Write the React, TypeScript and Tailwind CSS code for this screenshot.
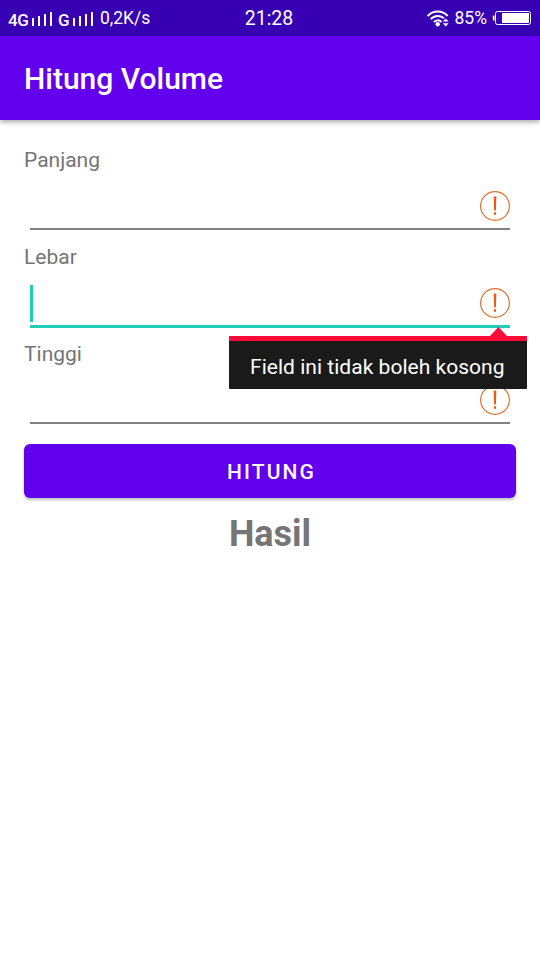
import React from "react";

function SignalBars() {
  return (
    <svg width="22" height="14" viewBox="0 0 22 14" fill="white" shapeRendering="crispEdges">
      <rect x="0" y="6" width="2" height="8" />
      <rect x="6" y="4" width="2" height="10" />
      <rect x="12" y="2" width="2" height="12" />
      <rect x="18" y="0" width="2" height="14" />
    </svg>
  );
}

function WifiIcon() {
  return (
    <svg width="22" height="17" viewBox="0 0 22 17" fill="none" stroke="white" strokeWidth="2">
      <path d="M0.7 6C6 0 15.4 0 20.7 6" />
      <path d="M3.8 9.2C7.5 5 13.9 5 17 8.4" />
      <path d="M6.9 12.2C8.9 9.8 12.5 9.8 14.5 12" />
      <circle cx="10.7" cy="14.2" r="2.2" fill="white" stroke="none" />
      <path d="M15.8 11.6L18.7 8.4L21.6 11.6ZM15.8 13.2L18.7 16.4L21.6 13.2Z" fill="white" stroke="none" />
    </svg>
  );
}

function BatteryIcon() {
  return (
    <svg width="40" height="16" viewBox="0 0 40 16">
      <rect x="0.8" y="5.5" width="1.8" height="5" rx="0.6" fill="white" />
      <rect x="3.5" y="1.5" width="35" height="13" rx="2" fill="none" stroke="white" strokeWidth="1" />
      <rect x="10" y="3" width="27" height="10" fill="white" />
    </svg>
  );
}

function ErrorIcon() {
  return (
    <svg width="30" height="30" viewBox="0 0 30 30">
      <circle cx="15" cy="15" r="14.4" fill="none" stroke="#e0702f" strokeWidth="1.2" />
      <path d="M13.7 5.6H16.3L15.9 19.6H14.1Z" fill="#ef5a10" />
      <rect x="14" y="21.2" width="2" height="2.6" fill="#ef5a10" />
    </svg>
  );
}

function Field({ label, active = false, children }: { label: string; active?: boolean; children?: React.ReactNode }) {
  return (
    <div className="relative">
      <div className="h-7 text-[21px] leading-[33px] text-[#757575]">{label}</div>
      <div className="mx-1.5 h-[69px]">
        <div className={active ? "flex h-[59px] items-start justify-between border-b-[3px] border-[#1fcdb9]" : "flex h-[58px] items-start justify-between border-b-2 border-[#828282]"}>
          <div className={active ? "mt-4 h-[37px] w-[3px] bg-[#1fcdb9]" : "w-[3px]"} />
          <div className="mt-[19px]">
            <ErrorIcon />
          </div>
        </div>
      </div>
      {children}
    </div>
  );
}

function ErrorPopup() {
  return (
    <div className="absolute left-[205px] top-[86px] z-10 w-[298px]">
      <svg className="ml-[261px] block" width="17" height="9" viewBox="0 0 17 9">
        <path d="M0 9L8.5 0L17 9Z" fill="#ff0a38" />
      </svg>
      <div className="h-[53px] rounded-b-[1px] border-t-[5px] border-[#ff0a38] bg-[#1a1a1a] pl-[21px] text-[21px] leading-[52px] tracking-[0.03px] text-white">
        Field ini tidak boleh kosong
      </div>
    </div>
  );
}

export default function App() {
  return (
    <div className="min-h-[960px] w-[540px] bg-white font-['Roboto',sans-serif]">
      <div className="grid h-9 grid-cols-3 items-center bg-[#3700b3] text-white">
        <div className="flex items-center whitespace-nowrap pl-2">
          <span className="mt-1 w-6 text-[17px] font-medium leading-none tracking-[-0.5px]">4G</span>
          <span className="mt-[2px]"><SignalBars /></span>
          <span className="ml-1 mt-1 w-[15px] text-[17px] font-medium leading-none">G</span>
          <span className="mt-[2px]"><SignalBars /></span>
          <span className="ml-[5px] mt-[2px] text-[17.5px] leading-none">0,2K/s</span>
        </div>
        <div className="pr-0.5 pt-px text-center text-[19.5px]">21:28</div>
        <div className="flex items-center justify-end pr-2">
          <WifiIcon />
          <span className="ml-1.5 mr-[5px] pt-px text-[17.5px]">85%</span>
          <BatteryIcon />
        </div>
      </div>
      <header className="flex h-[84px] items-center bg-[#6200ee] px-6 text-[30px] font-medium text-white shadow-[0_2px_5px_rgba(0,0,0,0.35)]">
        Hitung Volume
      </header>
      <main className="px-6 pt-6">
        <Field label="Panjang" />
        <Field label="Lebar" active>
          <ErrorPopup />
        </Field>
        <Field label="Tinggi" />
        <button className="mt-[9px] block h-[54px] w-full rounded-md bg-[#6200ee] pl-[3px] pt-[3px] text-[21px] font-medium tracking-[2.1px] text-white shadow-[0_2px_3px_rgba(0,0,0,0.25)]">
          HITUNG
        </button>
        <div className="mt-3 text-center text-4xl font-bold leading-[48px] text-[#757575]">Hasil</div>
      </main>
    </div>
  );
}
